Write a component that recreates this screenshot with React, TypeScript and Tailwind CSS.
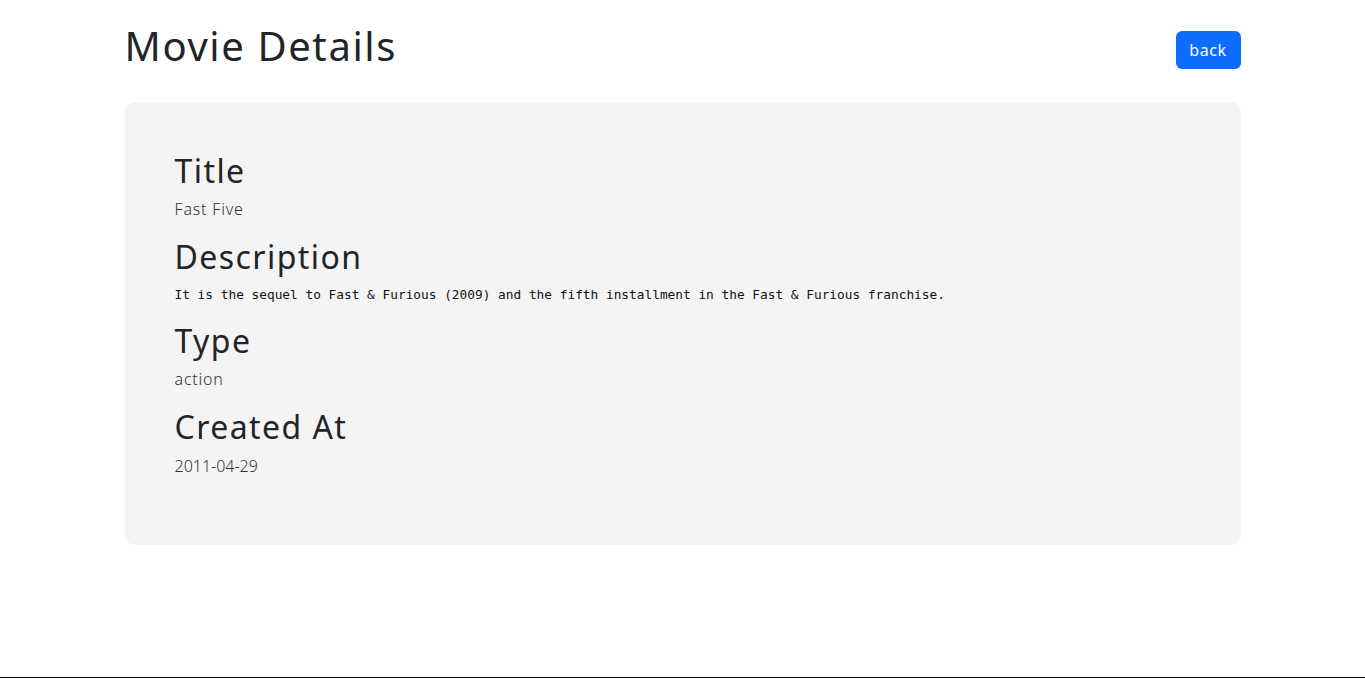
import React from 'react';

const movie = {
  title: 'Fast Five',
  description:
    'It is the sequel to Fast & Furious (2009) and the fifth installment in the Fast & Furious franchise.',
  type: 'action',
  createdAt: '2011-04-29',
};

const Field: React.FC<{ label: string; children: React.ReactNode; compact?: boolean }> = ({
  label,
  children,
  compact,
}) => (
  <div>
    <h2 className="text-[32px] leading-[1.2] font-normal text-[#212529] tracking-[0.045em] mb-[7px]">
      {label}
    </h2>
    <div className={compact ? 'h-[22px] mb-4 flex items-center' : 'h-6 mb-[17px] flex items-center'}>
      {children}
    </div>
  </div>
);

export default function App() {
  return (
    <div
      className="min-h-[678px] bg-white border-b border-black"
      style={{ fontFamily: '"Noto Sans", sans-serif' }}
    >
      <div className="w-[1116px] mx-auto pt-[22px]">
        <div className="flex items-center justify-between">
          <h1 className="text-[40px] leading-[1.2] font-normal text-[#212529] tracking-[0.04em] mb-2">
            Movie Details
          </h1>
          <button className="bg-[#0d6efd] text-white text-base tracking-[0.04em] w-[65px] h-[38px] rounded-md">
            back
          </button>
        </div>
        <div className="mt-[24px] bg-[#f4f4f4] rounded-[10px] p-[50px]">
          <Field label="Title">
            <p className="text-base font-light tracking-[0.05em] text-[#333]">{movie.title}</p>
          </Field>
          <Field label="Description" compact>
            <p
              className="text-[12.8px] text-[#111]"
              style={{ fontFamily: '"DejaVu Sans Mono", monospace' }}
            >
              {movie.description}
            </p>
          </Field>
          <Field label="Type">
            <p className="text-base font-light tracking-[0.05em] text-[#333]">{movie.type}</p>
          </Field>
          <Field label="Created At">
            <p className="text-base font-light text-[#333]">{movie.createdAt}</p>
          </Field>
        </div>
      </div>
    </div>
  );
}
